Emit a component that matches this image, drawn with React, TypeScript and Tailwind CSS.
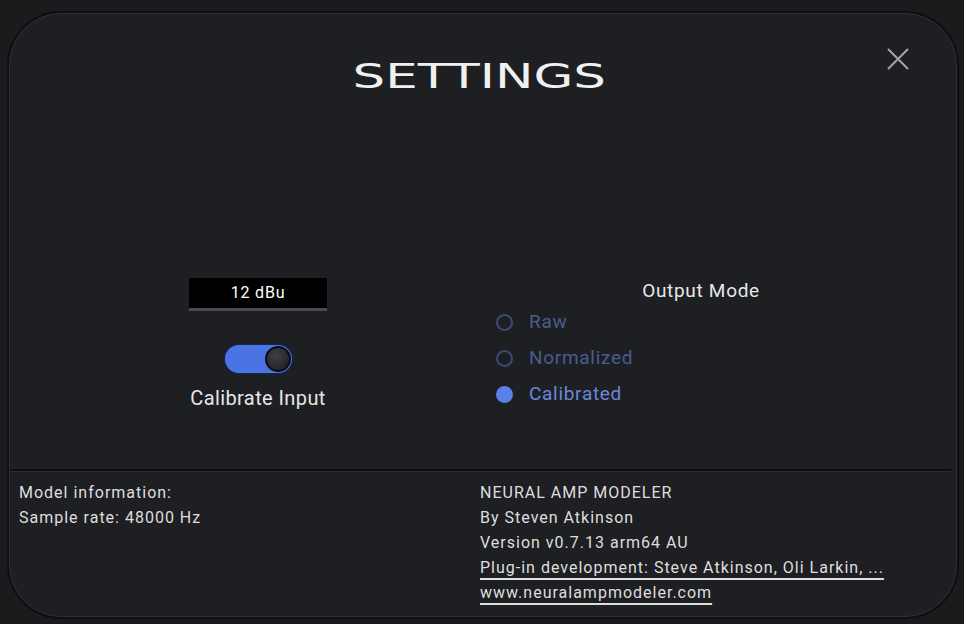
import { useState } from "react";

const body = { fontFamily: "Roboto, 'Noto Sans', sans-serif" };

function RadioRow({ label, selected }: { label: string; selected: boolean }) {
  return (
    <div className="flex h-[36px] items-center gap-[16px]">
      <span
        className={
          selected
            ? "h-[17px] w-[17px] rounded-full bg-[#5a80ea]"
            : "h-[17px] w-[17px] rounded-full border-[2.5px] border-[#3c4a72]"
        }
      />
      <span
        className={
          selected
            ? "text-[19px] tracking-[0.7px] text-[#6a88dc]"
            : "text-[19px] tracking-[0.7px] text-[#4a5c92]"
        }
      >
        {label}
      </span>
    </div>
  );
}

export default function App() {
  const [mode] = useState("Calibrated");

  return (
    <div
      className="h-[624px] w-[964px] overflow-hidden bg-[#1a1b1d] pb-[7px] pl-[9px] pr-[7px] pt-[13px]"
      style={body}
    >
      <div className="relative flex h-full flex-col rounded-[52px] border border-[#303134] bg-[#1e1f22] shadow-[0_0_0_2px_#0e0f10]">
        <button className="absolute right-[47px] top-[34px] text-[#a4a4a6]">
          <svg width="22" height="22" viewBox="0 0 22 22" fill="none" stroke="currentColor" strokeWidth="2" strokeLinecap="round">
            <path d="M1.5 1.5 L20.5 20.5 M20.5 1.5 L1.5 20.5" />
          </svg>
        </button>

        <div className="flex h-[85px] items-end justify-center pb-[6px] pr-[8px]">
          <h1
            className="inline-block origin-center scale-x-[1.56] text-[33px] font-normal leading-none text-[#f0f0f0]"
            style={{ fontFamily: "'DejaVu Sans', sans-serif" }}
          >
            SETTINGS
          </h1>
        </div>

        <div className="flex flex-1 pt-[179px]">
          <div className="ml-[16px] flex w-[464px] flex-col items-center">
            <div className="flex h-[33px] w-[138px] items-center justify-center border-b-[3px] border-[#4a4b4e] bg-black text-[16px] tracking-[0.8px] text-white">
              12 dBu
            </div>
            <div className="mt-[34px] flex h-[28px] w-[67px] items-center justify-end rounded-full bg-[#4a74e4] p-[1px] shadow-[0_0_0_1px_#15254d]">
              <span className="h-[26px] w-[26px] rounded-full border-2 border-[#0c0d10] bg-[radial-gradient(circle_at_40%_35%,#3e4046,#1b1c20)]" />
            </div>
            <div className="mt-[10px] text-[20px] tracking-[0.4px] text-[#e6e6e6]">Calibrate Input</div>
          </div>

          <div className="ml-[6px] flex w-[410px] flex-col">
            <div className="self-center text-[19px] leading-[26px] tracking-[0.7px] text-[#e8e8e8]">
              Output Mode
            </div>
            <div className="flex flex-col">
              {["Raw", "Normalized", "Calibrated"].map((m) => (
                <RadioRow key={m} label={m} selected={m === mode} />
              ))}
            </div>
          </div>
        </div>

        <div className="mr-[5px] h-[3px] border-b border-t-2 border-b-[#2c2d30] border-t-[#0d0e0f]" />

        <div className="flex h-[144px] pt-[8px] text-[16px] leading-[25px] tracking-[1px] text-[#dedede]">
          <div className="w-[460px] pl-[9px]">
            <div>Model information:</div>
            <div>Sample rate: 48000 Hz</div>
          </div>
          <div className="pl-[10px]">
            <div>NEURAL AMP MODELER</div>
            <div>By Steven Atkinson</div>
            <div>Version v0.7.13 arm64 AU</div>
            <div>
              <span className="underline decoration-2 underline-offset-[5px]">
                Plug-in development: Steve Atkinson, Oli Larkin, ...
              </span>
            </div>
            <div>
              <span className="underline decoration-2 underline-offset-[5px]">
                www.neuralampmodeler.com
              </span>
            </div>
          </div>
        </div>
      </div>
    </div>
  );
}
